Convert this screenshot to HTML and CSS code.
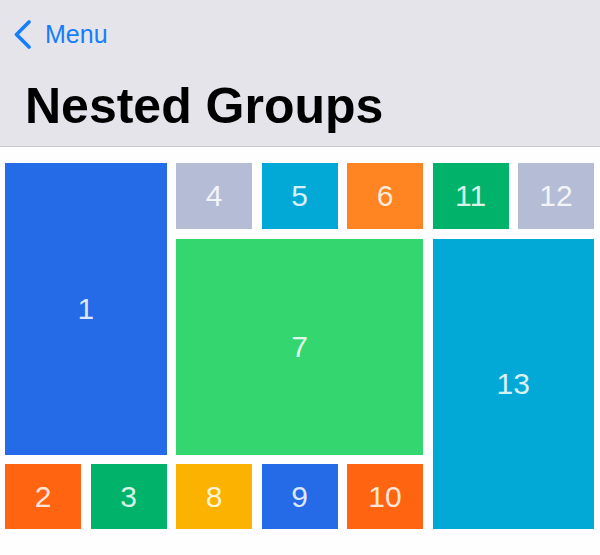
FILE: index.html
```html
<!DOCTYPE html>
<html lang="en">
<head>
    <meta charset="UTF-8">
    <meta name="viewport" content="width=device-width, initial-scale=1.0">
    <title>Nested Groups</title>
    <link rel="stylesheet" href="styles.css">
</head>
<body>
    <header class="nav-bar">
        <a class="back-link" href="#">
            <svg class="chevron" width="17" height="29" viewBox="0 0 17 29">
                <polyline points="15,2 2.5,14.5 15,27" fill="none" stroke="#147efb" stroke-width="3.6" stroke-linecap="round" stroke-linejoin="round"/>
            </svg>
            <span>Menu</span>
        </a>
        <h1 class="title">Nested Groups</h1>
    </header>

    <main class="tiles">
        <div class="tile blue t1">1</div>
        <div class="tile red-orange t2">2</div>
        <div class="tile green t3">3</div>
        <div class="tile slate t4">4</div>
        <div class="tile cyan t5">5</div>
        <div class="tile orange t6">6</div>
        <div class="tile mint t7">7</div>
        <div class="tile yellow t8">8</div>
        <div class="tile blue t9">9</div>
        <div class="tile red-orange t10">10</div>
        <div class="tile green t11">11</div>
        <div class="tile slate t12">12</div>
        <div class="tile cyan t13">13</div>
    </main>
</body>
</html>
```

FILE: styles.css
```css
/* General Reset */
* {
  margin: 0;
  padding: 0;
  box-sizing: border-box;
}

body {
  font-family: "Liberation Sans", Arial, sans-serif;
  background-color: #fefdff;
  color: #000;
}

/* Navigation Bar */
.nav-bar {
  height: 147px;
  padding: 19px 0 0 14px;
  background-color: #e5e4ea;
  border-bottom: 1px solid #c8c7cc;
}

.back-link {
  display: flex;
  align-items: center;
  gap: 14px;
  height: 30px;
  color: #147efb;
  font-size: 25px;
  line-height: 30px;
  text-decoration: none;
}

.chevron {
  display: block;
}

.title {
  margin: 27px 0 0 11px;
  font-size: 50px;
  line-height: 60px;
  font-weight: bold;
}

/* Tile Grid */
.tiles {
  display: grid;
  grid-template-columns: repeat(7, 1fr);
  grid-template-rows: 66px 1fr 65px;
  gap: 9.5px;
  height: 382px;
  padding: 16px 6px 0 5px;
}

.tile {
  display: flex;
  align-items: center;
  justify-content: center;
  color: rgba(255, 255, 255, 0.85);
  font-size: 30px;
}

.t1 { grid-column: 1 / 3; grid-row: 1 / 3; }
.t2 { grid-column: 1; grid-row: 3; }
.t3 { grid-column: 2; grid-row: 3; }
.t4 { grid-column: 3; grid-row: 1; }
.t5 { grid-column: 4; grid-row: 1; }
.t6 { grid-column: 5; grid-row: 1; }
.t7 { grid-column: 3 / 6; grid-row: 2; }
.t8 { grid-column: 3; grid-row: 3; }
.t9 { grid-column: 4; grid-row: 3; }
.t10 { grid-column: 5; grid-row: 3; }
.t11 { grid-column: 6; grid-row: 1; }
.t12 { grid-column: 7; grid-row: 1; }
.t13 { grid-column: 6 / 8; grid-row: 2 / 4; }

/* Colours */
.blue { background-color: #256be7; }
.red-orange { background-color: #ff6410; }
.green { background-color: #00b26a; }
.slate { background-color: #b4bcd6; }
.cyan { background-color: #02a8d6; }
.orange { background-color: #ff8422; }
.mint { background-color: #34d66f; }
.yellow { background-color: #fbb200; }
```
